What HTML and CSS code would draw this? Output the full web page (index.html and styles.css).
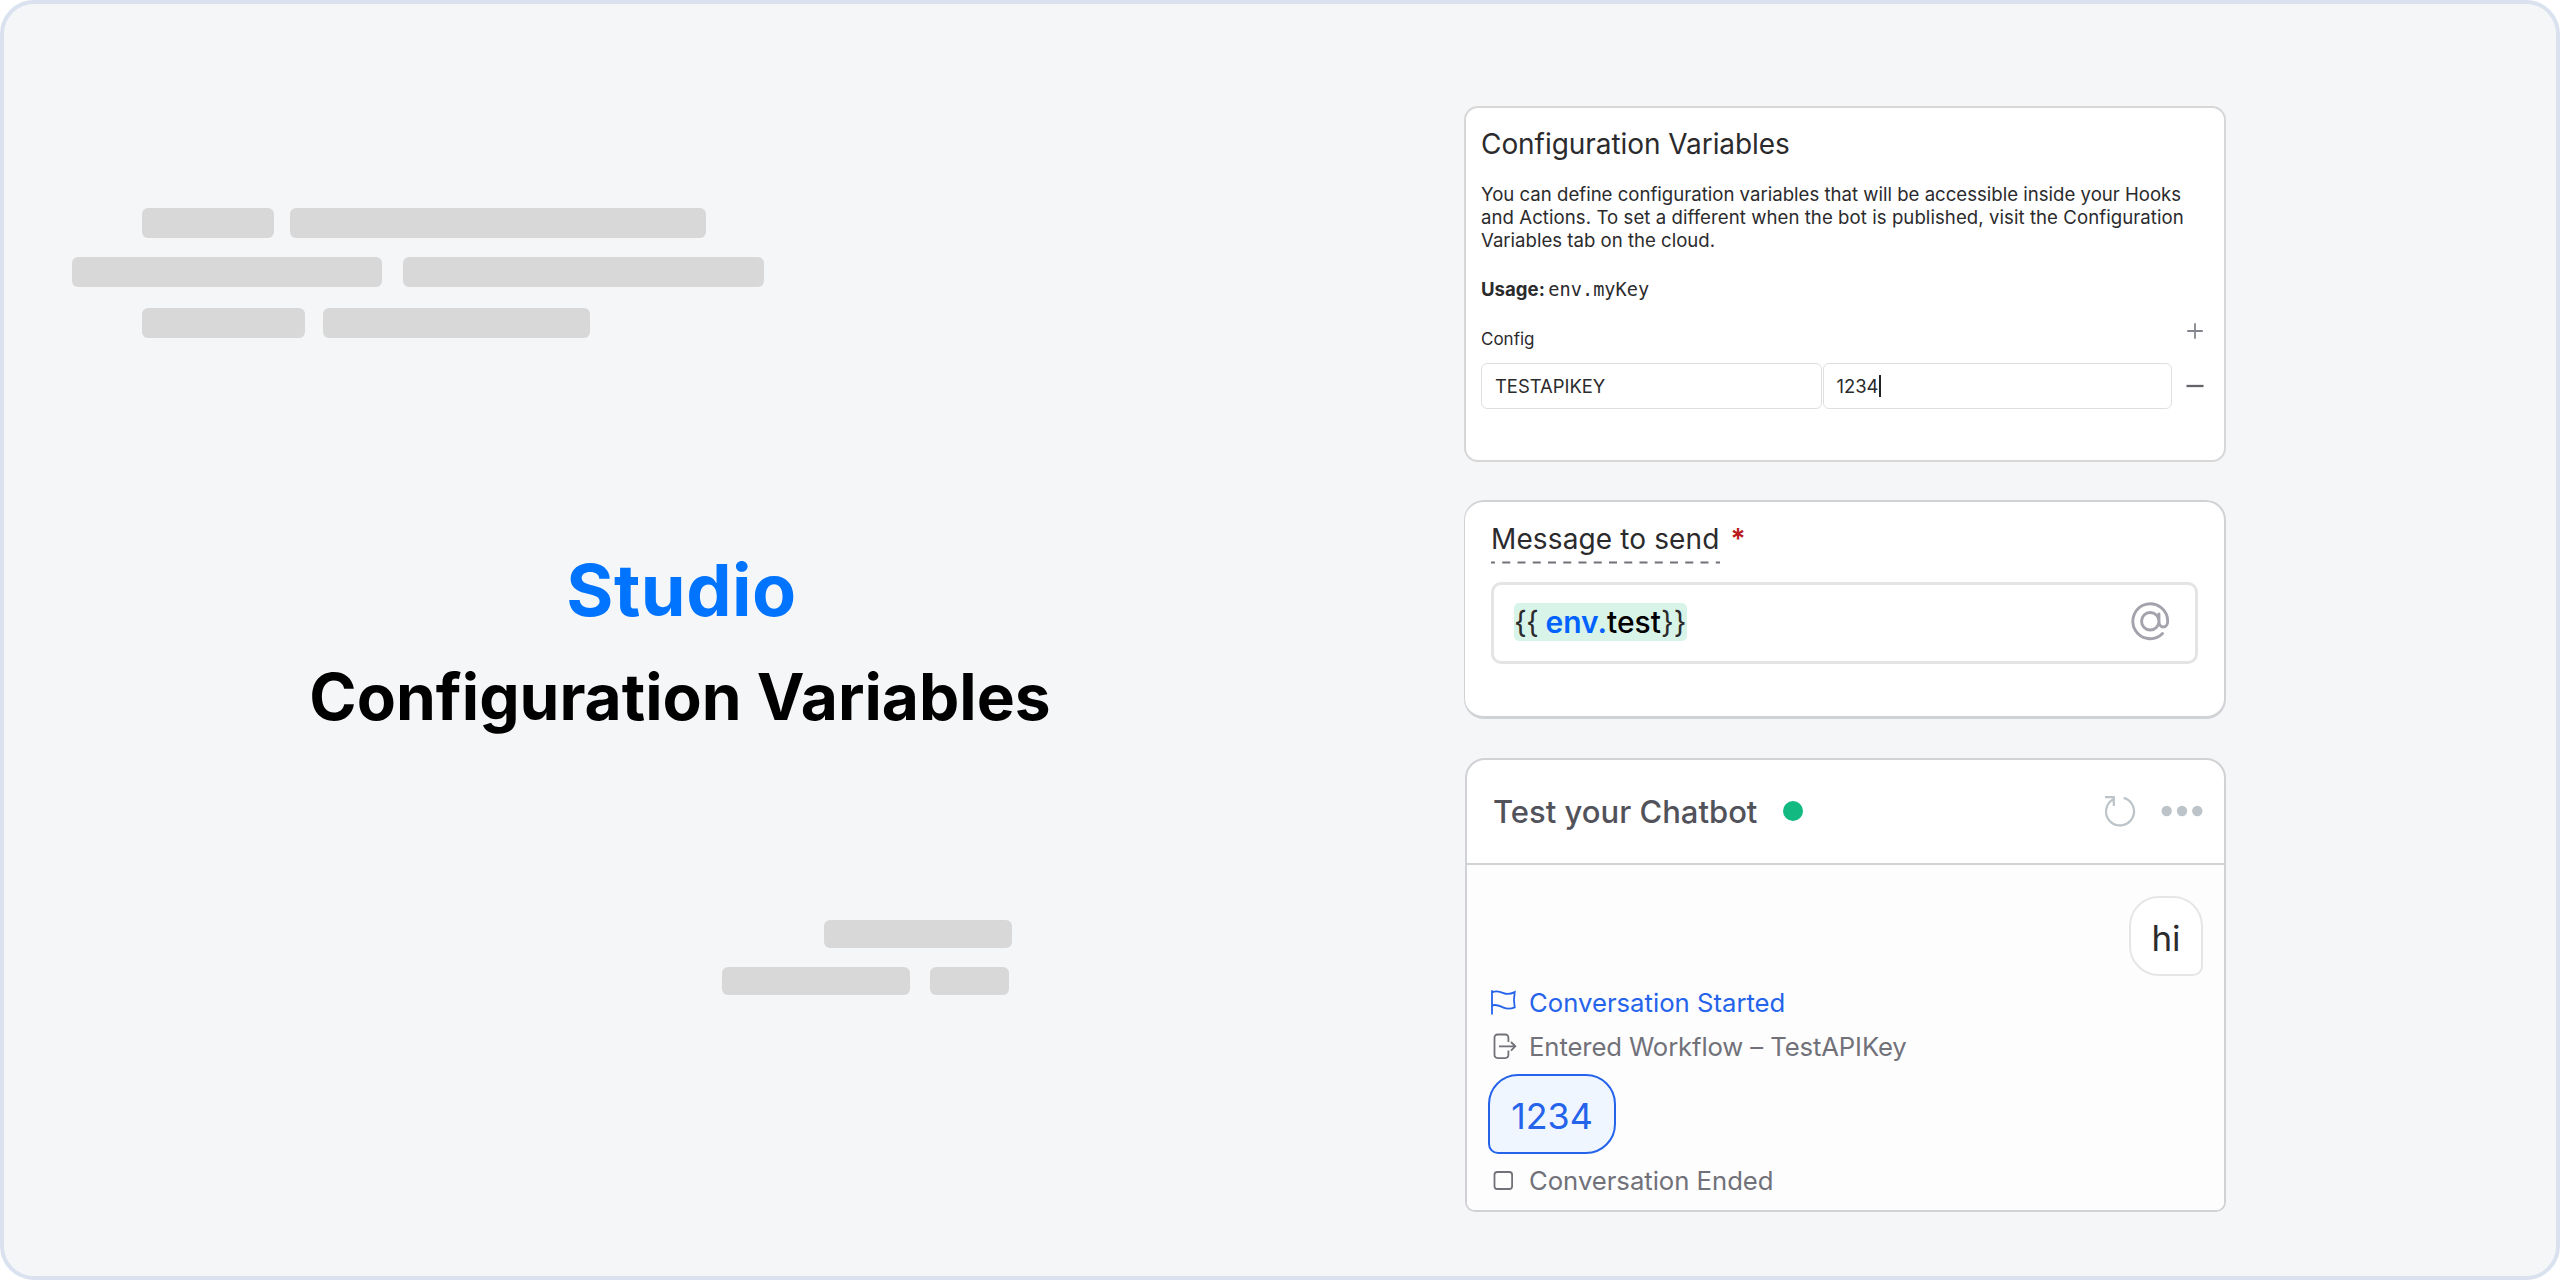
FILE: index.html
```html
<!DOCTYPE html>
<html lang="en">
<head>
<meta charset="utf-8">
<title>Studio – Configuration Variables</title>
<link rel="stylesheet" href="styles.css">
</head>
<body>
<main class="stage">
  <section class="intro">
    <div class="bars bars-top">
      <div class="bar-row indent"><span class="bar w132"></span><span class="bar w416"></span></div>
      <div class="bar-row wide"><span class="bar w310"></span><span class="bar w361"></span></div>
      <div class="bar-row indent last"><span class="bar w163"></span><span class="bar w267"></span></div>
    </div>
    <div class="hero">
      <h1 class="product">Studio</h1>
      <h2 class="topic">Configuration Variables</h2>
    </div>
    <div class="bars bars-bottom">
      <div class="bar-row first"><span class="bar w188"></span></div>
      <div class="bar-row second"><span class="bar w188"></span><span class="bar w79"></span></div>
    </div>
  </section>

  <section class="cards">
    <article class="card config">
      <h3 class="config-title">Configuration Variables</h3>
      <p class="config-text">You can define configuration variables that will be accessible inside your Hooks<br><span class="loose">and Actions. To set a different when the bot is published, visit the Configuration</span><br>Variables tab on the cloud.</p>
      <p class="usage"><b>Usage:</b><code>env.myKey</code></p>
      <div class="config-head">
        <span class="config-label">Config</span>
        <svg class="plus" viewBox="0 0 18 18"><path d="M9 1.2v15.6M1.2 9h15.6"/></svg>
      </div>
      <div class="pair">
        <div class="field key"><span>TESTAPIKEY</span></div>
        <div class="field value"><span>1234</span><i class="caret"></i></div>
        <svg class="minus" viewBox="0 0 18 18"><path d="M.5 9h17"/></svg>
      </div>
    </article>

    <article class="card message">
      <div class="message-head"><span class="message-label">Message to send</span><span class="required">*</span></div>
      <svg class="dashes" viewBox="0 0 229 3"><path d="M0 1.5H229" stroke-dasharray="8 7.25" stroke-dashoffset="4"/></svg>
      <div class="message-input">
        <span class="token"><span class="brace open">{{</span><span class="env">env.</span><span class="name">test</span><span class="brace">}}</span></span>
        <svg class="at" viewBox="0 0 24 24"><path d="M16.5 12a4.5 4.5 0 1 1-9 0 4.5 4.5 0 0 1 9 0Zm0 0c0 1.657 1.007 3 2.25 3S21 13.657 21 12a9 9 0 1 0-2.636 6.364M16.5 12V8.25"/></svg>
      </div>
    </article>

    <article class="card chat">
      <header class="chat-head">
        <span class="chat-title">Test your Chatbot</span>
        <i class="online"></i>
        <svg class="reload" viewBox="0 0 32 32"><path d="M19.6 2.9A14 14 0 1 1 9.8 3.9M1 2.2h9.7M9.8 1.2v9.8"/></svg>
        <svg class="more" viewBox="0 0 42 12"><circle cx="5.7" cy="6" r="5.2"/><circle cx="21" cy="6" r="5.2"/><circle cx="36.3" cy="6" r="5.2"/></svg>
      </header>
      <div class="chat-body">
        <div class="bubble user"><span>hi</span></div>
        <div class="event started">
          <svg class="event-icon" viewBox="0 0 28 28"><path d="M4 2.2v24.4M4 4.4c4-1.8 8-.8 11.5.7s7.5.8 11.2-1c-1 5.5-1 10.5 0 15.3-4 1.6-7.7 1.7-11.2.2S8 15.6 4 17.6"/></svg>
          <span>Conversation Started</span>
        </div>
        <div class="event entered">
          <svg class="event-icon" viewBox="0 0 28 28"><path d="M20.400 10V5.500a3 3 0 0 0-3-3H9.500a3 3 0 0 0-3 3v17.600a3 3 0 0 0 3 3h7.900a3 3 0 0 0 3-3v-4.500M11 14.300h16.200M23 10l4.300 4.300L23 18.600"/></svg>
          <span>Entered Workflow – TestAPIKey</span>
        </div>
        <div class="bubble bot"><span>1234</span></div>
        <div class="event ended">
          <svg class="event-icon" viewBox="0 0 28 28"><rect x="6.5" y="6" width="17.6" height="17" rx="2.8"/></svg>
          <span>Conversation Ended</span>
        </div>
      </div>
    </article>
  </section>
</main>
</body>
</html>
```
FILE: styles.css
```css
* { box-sizing: border-box; }
body { margin: 0; background: #fff; font-family: Inter, "Liberation Sans", sans-serif; color: #2b2b2d; }
h1, h2, h3, p { margin: 0; }
svg { display: block; flex: none; fill: none; overflow: visible; }

.stage { display: flex; width: 2560px; height: 1280px; border: 4px solid #dae2ef; border-radius: 34px; background: #f5f6f8; }

/* Left side */
.intro { width: 1460px; padding-top: 204px; }
.bar-row { display: flex; }
.bar { display: block; height: 29.5px; border-radius: 6px; background: #d8d8d8; }
.indent { margin-left: 138.3px; gap: 16px; }
.wide { margin: 19.5px 0 21.5px 68px; gap: 21.2px; }
.last { gap: 17.5px; }
.w132 { width: 131.7px; }
.w416 { width: 415.6px; }
.w310 { width: 309.5px; }
.w361 { width: 361px; }
.w163 { width: 163.2px; }
.w267 { width: 267.5px; }
.w188 { width: 188px; }
.w79 { width: 79px; }
.hero { width: 1352px; margin-top: 208.3px; text-align: center; }
.product { padding-left: 3px; font-size: 72px; line-height: 88px; font-weight: 700; letter-spacing: .5px; color: #0074ff; }
.topic { margin-top: 23px; font-size: 64px; line-height: 80px; font-weight: 700; color: #000; }
.bars-bottom { margin-top: 183.3px; }
.bars-bottom .bar { height: 28px; }
.first { margin-left: 820px; }
.second { margin: 19px 0 0 718px; gap: 20px; }

/* Cards */
.cards { width: 762px; padding-top: 102px; }
.card { border: 2px solid #d1d2d6; background: #fff; }
.config { height: 356px; padding: 18.8px 15px 0; border-color: #d7d7d7; border-radius: 14px; }
.config-title { font-size: 28px; line-height: 34px; font-weight: 400; letter-spacing: -.06px; }
.config-text { margin-top: 22px; font-size: 18.6px; line-height: 23.25px; white-space: nowrap; }
.loose { letter-spacing: .06px; }
.usage { display: flex; align-items: baseline; gap: 3.5px; margin-top: 24px; font-size: 18.6px; line-height: 24px; }
.usage code { font: 18.6px/24px "DejaVu Sans Mono", monospace; }
.config-head { display: flex; justify-content: space-between; height: 61.5px; }
.config-label { margin-top: 26.5px; font-size: 17px; line-height: 22px; }
.plus { width: 18px; height: 18px; margin: 20px 5px 0 0; stroke: #85858f; stroke-width: 1.8; }
.pair { display: flex; align-items: center; }
.field { display: flex; align-items: center; height: 46px; padding: 0 0 1px 13px; border: 1.5px solid #dfdfdf; border-radius: 6px; font-size: 18.4px; }
.key { width: 341px; }
.value { width: 349px; margin-left: .5px; }
.caret { width: 2px; height: 22px; margin-left: 1px; background: #222; }
.minus { width: 18px; height: 18px; margin-left: 14.5px; stroke: #63636a; stroke-width: 2.3; }

.message { height: 219px; margin-top: 38px; padding: 20px 26px 0; border-left-width: 1px; border-bottom-width: 3px; border-radius: 20px; }
.message-head { display: flex; gap: 11px; font-size: 28px; line-height: 34px; letter-spacing: .12px; }
.required { color: #b91c1c; font-weight: 600; }
.dashes { width: 229px; height: 3px; margin-top: 5px; stroke: #71717a; stroke-width: 2; }
.message-input { display: flex; align-items: center; justify-content: space-between; width: 707px; height: 82px; margin-top: 17.5px; padding: 0 22px 2px 20px; border: 3px solid #e4e4e4; border-radius: 10px; }
.token { display: flex; height: 38px; align-items: center; border-radius: 5px; background: #d8f4e8; font-size: 30px; font-weight: 500; }
.brace { font-weight: 400; }
.open { letter-spacing: -.8px; }
.env { margin-left: 7.5px; font-weight: 600; color: #0062ff; }
.name { color: #000; }
.at { width: 46.5px; height: 46.5px; stroke: #a3a3ad; stroke-width: 1.5; stroke-linecap: round; }

.chat { width: 761px; height: 454px; margin: 39px 0 0 1px; border-radius: 20px 20px 10px 10px; overflow: hidden; }
.chat-head { display: flex; align-items: center; height: 105px; padding: 0 21px 1px 26px; border-bottom: 2px solid #d1d2d6; }
.chat-title { font-size: 31px; font-weight: 500; color: #52525b; }
.online { width: 20px; height: 20px; margin-left: 26px; border-radius: 50%; background: #12b981; }
.reload { width: 32px; height: 32px; margin: 0 25px 0 auto; stroke: #bcc4c9; stroke-width: 2.2; }
.more { width: 42px; height: 12px; fill: #bcc4c9; }
.chat-body { height: 345px; padding: 31px 21px 0; background: #fdfdfd; }
.bubble { display: flex; align-items: center; justify-content: center; height: 80px; padding-top: 3px; border: 2px solid #e6e6e6; background: #fff; font-size: 35px; }
.user { width: 74px; margin-left: auto; border-radius: 30px 30px 10px 30px; }
.event { display: flex; align-items: center; gap: 13px; height: 32px; font-size: 25.7px; color: #71717a; }
.event-icon { width: 28px; height: 28px; stroke: currentColor; stroke-width: 1.8; }
.started { margin-top: 10px; color: #2563eb; }
.entered { margin-top: 12px; letter-spacing: -.12px; }
.bot { width: 128px; margin-top: 12px; border-width: 2px; border-color: #2563eb; border-radius: 30px 30px 30px 10px; background: #eff6ff; color: #2563eb; font-size: 35.8px; }
.ended { margin-top: 10px; letter-spacing: -.03px; }
```
